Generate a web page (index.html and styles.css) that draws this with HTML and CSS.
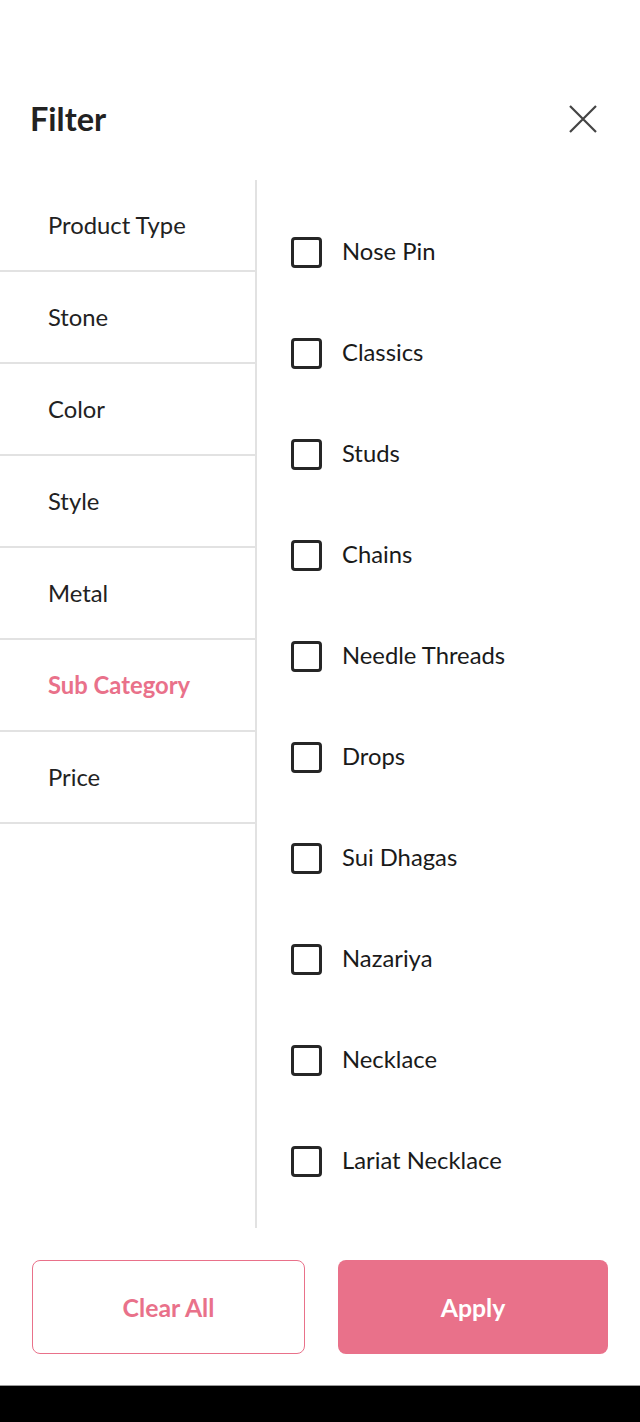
FILE: index.html
```html
<!DOCTYPE html>
<html>
<head>
<meta charset="utf-8">
<link rel="stylesheet" href="styles.css">
</head>
<body>
<div class="page">
  <header class="header">
    <h1 class="title">Filter</h1>
    <button class="close" aria-label="Close">
      <svg width="28" height="28" viewBox="0 0 28 28"><path d="M1 1 L27 27 M27 1 L1 27" stroke="#444" stroke-width="2.2" fill="none"/></svg>
    </button>
  </header>
  <main class="main">
    <nav class="tabs">
      <div class="tab">Product Type</div>
      <div class="tab">Stone</div>
      <div class="tab">Color</div>
      <div class="tab">Style</div>
      <div class="tab">Metal</div>
      <div class="tab active">Sub Category</div>
      <div class="tab">Price</div>
    </nav>
    <section class="options">
      <label class="opt"><span class="box"></span><span>Nose Pin</span></label>
      <label class="opt"><span class="box"></span><span>Classics</span></label>
      <label class="opt"><span class="box"></span><span>Studs</span></label>
      <label class="opt"><span class="box"></span><span>Chains</span></label>
      <label class="opt"><span class="box"></span><span>Needle Threads</span></label>
      <label class="opt"><span class="box"></span><span>Drops</span></label>
      <label class="opt"><span class="box"></span><span>Sui Dhagas</span></label>
      <label class="opt"><span class="box"></span><span>Nazariya</span></label>
      <label class="opt"><span class="box"></span><span>Necklace</span></label>
      <label class="opt"><span class="box"></span><span>Lariat Necklace</span></label>
    </section>
  </main>
  <footer class="footer">
    <button class="btn btn-outline">Clear All</button>
    <button class="btn btn-fill">Apply</button>
  </footer>
  <div class="navbar"></div>
</div>
</body>
</html>
```
FILE: styles.css
```css
* { box-sizing: border-box; }
html, body { margin: 0; padding: 0; background: #fff; }
body { font-family: Lato, "Noto Sans", sans-serif; color: #1f1f1f; }
.page { width: 640px; height: 1422px; display: flex; flex-direction: column; }
.header { height: 180px; display: flex; align-items: center; justify-content: space-between; padding: 60px 43px 0 30px; }
.title { margin: 0; font-size: 32.5px; font-weight: 700; color: #222; margin-top: -3px; }
.close { background: none; border: 0; padding: 0; width: 28px; height: 28px; display: flex; margin-top: -2px; }
.main { height: 1048px; display: flex; }
.tabs { width: 257px; border-right: 2px solid #e2e2e2; display: flex; flex-direction: column; }
.tab { height: 92px; border-bottom: 2px solid #e2e2e2; display: flex; align-items: center; padding-left: 48px; font-size: 23.8px; color: #222; }
.tab.active { color: #e9718a; font-weight: 700; }
.options { flex: 1; padding-top: 20px; padding-left: 34px; }
.opt { height: 101px; display: flex; align-items: center; gap: 20px; font-size: 23.8px; color: #1a1a1a; }
.box { width: 31px; height: 31px; border: 3px solid #262626; border-radius: 4px; flex: none; margin-top: 4px; }
.footer { flex: 1; display: flex; gap: 33px; padding: 32px 32px 0 32px; }
.btn { height: 94px; border-radius: 8px; font-family: Lato, "Noto Sans", sans-serif; font-size: 24.8px; font-weight: 700; }
.btn-outline { width: 273px; background: #fff; border: 1.5px solid #e9718a; color: #e9718a; }
.btn-fill { width: 270px; background: #e9718a; border: 0; color: #fff; }
.navbar { height: 37px; background: #000; border-top: 1px solid #9a9a9a; }
```
